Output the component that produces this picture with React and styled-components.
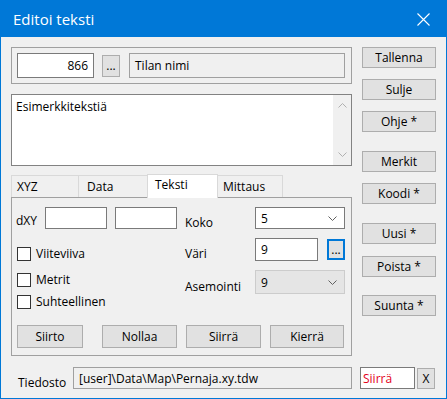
import React from 'react';
import styled, { createGlobalStyle } from 'styled-components';

const Global = createGlobalStyle`
  html, body { margin: 0; padding: 0; background: #f0f0f0; }
  body { font-family: "Open Sans", "Noto Sans", sans-serif; font-size: 12px; color: #000; }
  * { box-sizing: border-box; }
`;

const Window = styled.div`
  width: 447px;
  height: 399px;
  border: 1px solid #0078d7;
  background: #f0f0f0;
  display: flex;
  flex-direction: column;
`;

const TitleBar = styled.div`
  height: 36px;
  flex: none;
  background: #0078d7;
  color: #fff;
  display: flex;
  align-items: center;
  justify-content: space-between;
  padding: 0 16px 0 12px;
  font-size: 15px;
`;

const Body = styled.div`
  flex: 1;
  display: flex;
  flex-direction: column;
  padding: 10px 10px 0 10px;
`;

const Main = styled.div`
  display: flex;
  gap: 10px;
`;

const LeftCol = styled.div`
  width: 341px;
  display: flex;
  flex-direction: column;
`;

const RightCol = styled.div`
  width: 74px;
  display: flex;
  flex-direction: column;
`;

const GroupBox = styled.div`
  height: 37px;
  border: 1px solid #a0a0a0;
  display: flex;
  align-items: center;
  padding: 0 6px 0 5px;
`;

const Field = styled.div`
  height: ${p => p.$h || 25}px;
  width: ${p => (p.$w ? p.$w + 'px' : 'auto')};
  flex: ${p => (p.$w ? 'none' : '1')};
  margin-left: ${p => p.$ml || 0}px;
  background: ${p => (p.$ro ? '#f0f0f0' : '#fff')};
  border: 1px solid ${p => (p.$ro ? '#a0a0a0' : '#7a7a7a')};
  color: ${p => p.$color || '#000'};
  display: flex;
  align-items: center;
  justify-content: ${p => (p.$right ? 'flex-end' : 'flex-start')};
  padding: 0 ${p => (p.$right ? 5 : 0)}px 0 ${p => (p.$pl ?? 5)}px;
  white-space: nowrap;
  overflow: hidden;
`;

const Button = styled.div`
  height: ${p => p.$h || 21}px;
  width: ${p => (p.$w ? p.$w + 'px' : '100%')};
  flex: none;
  margin-left: ${p => p.$ml || 0}px;
  margin-top: ${p => p.$mt || 0}px;
  background: #e1e1e1;
  border: 1px solid ${p => (p.$focus ? '#0078d7' : '#adadad')};
  box-shadow: ${p => (p.$focus ? 'inset 0 0 0 1px #0078d7' : 'none')};
  display: flex;
  align-items: center;
  justify-content: center;
  white-space: nowrap;
`;

const TextArea = styled.div`
  margin-top: 10px;
  height: 72px;
  border: 1px solid #828282;
  background: #fff;
  display: flex;
`;

const TextContent = styled.div`
  flex: 1;
  padding: 3px 4px;
`;

const ScrollBar = styled.div`
  width: 18px;
  background: #f0f0f0;
  display: flex;
  flex-direction: column;
  justify-content: space-between;
  align-items: center;
  padding: 8px 0 8px;
`;

const TabStrip = styled.div`
  margin-top: 8px;
  height: 23px;
  display: flex;
  align-items: flex-end;
`;

const Tab = styled.div`
  width: ${p => p.$w}px;
  height: ${p => (p.$active ? 24 : 22)}px;
  padding-left: ${p => p.$pl}px;
  padding-bottom: ${p => (p.$active ? 4 : 1)}px;
  margin-left: ${p => (p.$first ? 0 : -1)}px;
  margin-bottom: ${p => (p.$active ? -1 : 0)}px;
  position: relative;
  z-index: ${p => (p.$active ? 2 : 1)};
  background: ${p => (p.$active ? '#fff' : '#f0f0f0')};
  border: 1px solid #d9d9d9;
  border-bottom: none;
  display: flex;
  align-items: center;
`;

const TabPanel = styled.div`
  height: 159px;
  border: 1px solid #a0a0a0;
  background: #f0f0f0;
  display: flex;
  flex-direction: column;
  padding: 9px 6px 7px 4px;
`;

const PanelTop = styled.div`
  display: flex;
  gap: 8px;
`;

const LeftArea = styled.div`
  width: 161px;
  display: flex;
  flex-direction: column;
`;

const DxyRow = styled.div`
  height: 22px;
  display: flex;
  align-items: center;
`;

const DxyLabel = styled.span`
  width: 29px;
  padding-top: 5px;
`;

const CheckRow = styled.div`
  display: flex;
  align-items: center;
  height: 15px;
  margin-top: ${p => p.$mt}px;
  padding-left: 1px;
`;

const CheckBox = styled.span`
  width: 14px;
  height: 14px;
  background: #fff;
  border: 1px solid #333;
  margin-right: 5px;
  flex: none;
`;

const RightArea = styled.div`
  flex: 1;
  display: grid;
  grid-template-columns: 70px 90px;
  grid-template-rows: 22px 23px 24px;
  row-gap: 9px;
`;

const FormLabel = styled.span`
  align-self: center;
  padding-top: 8px;
`;

const ControlRow = styled.div`
  display: flex;
  align-items: center;
`;

const Combo = styled.div`
  height: ${p => p.$h}px;
  background: ${p => (p.$list ? '#e5e5e5' : '#fff')};
  border: 1px solid ${p => (p.$list ? '#cccccc' : '#7a7a7a')};
  display: flex;
  align-items: center;
  justify-content: space-between;
  padding: 0 7px 0 5px;
`;

const ButtonRow = styled.div`
  margin-top: auto;
  display: flex;
`;

const BottomRow = styled.div`
  margin-top: 11px;
  height: 22px;
  display: flex;
  align-items: center;
`;

const BottomLabel = styled.span`
  width: 62px;
  padding-left: 7px;
  padding-top: 8px;
`;

const Chevron = ({ up, color = '#606060' }) => (
  <svg width="9" height="5" viewBox="0 0 9 5">
    <polyline
      points={up ? '0.5,4.5 4.5,0.5 8.5,4.5' : '0.5,0.5 4.5,4.5 8.5,0.5'}
      fill="none"
      stroke={color}
      strokeWidth="1"
    />
  </svg>
);

const CloseIcon = () => (
  <svg width="13" height="13" viewBox="0 0 13 13">
    <path d="M0.5 0.5 L12.5 12.5 M12.5 0.5 L0.5 12.5" stroke="#fff" strokeWidth="1.1" />
  </svg>
);

export default function App() {
  return (
    <>
      <Global />
      <Window>
        <TitleBar>
          <span>Editoi teksti</span>
          <CloseIcon />
        </TitleBar>
        <Body>
          <Main>
            <LeftCol>
              <GroupBox>
                <Field $w={77} $right>866</Field>
                <Button $w={18} $h={22} $ml={8}>...</Button>
                <Field $ml={9} $ro>Tilan nimi</Field>
              </GroupBox>
              <TextArea>
                <TextContent>Esimerkkitekstiä</TextContent>
                <ScrollBar>
                  <Chevron up color="#b0b0b0" />
                  <Chevron color="#b0b0b0" />
                </ScrollBar>
              </TextArea>
              <TabStrip>
                <Tab $w={68} $pl={5} $first>XYZ</Tab>
                <Tab $w={70} $pl={8}>Data</Tab>
                <Tab $w={71} $pl={7} $active>Teksti</Tab>
                <Tab $w={66} $pl={5}>Mittaus</Tab>
              </TabStrip>
              <TabPanel>
                <PanelTop>
                  <LeftArea>
                    <DxyRow>
                      <DxyLabel>dXY</DxyLabel>
                      <Field $w={62} $h={22}></Field>
                      <Field $w={62} $h={22} $ml={8}></Field>
                    </DxyRow>
                    <CheckRow $mt={17}><CheckBox />Viiteviiva</CheckRow>
                    <CheckRow $mt={11}><CheckBox />Metrit</CheckRow>
                    <CheckRow $mt={7}><CheckBox />Suhteellinen</CheckRow>
                  </LeftArea>
                  <RightArea>
                    <FormLabel>Koko</FormLabel>
                    <Combo $h={22}>5<Chevron /></Combo>
                    <FormLabel>Väri</FormLabel>
                    <ControlRow>
                      <Field $w={63} $h={23}>9</Field>
                      <Button $w={18} $h={21} $ml={9} $focus>...</Button>
                    </ControlRow>
                    <FormLabel>Asemointi</FormLabel>
                    <Combo $h={24} $list>9<Chevron /></Combo>
                  </RightArea>
                </PanelTop>
                <ButtonRow>
                  <Button $w={66} $h={23} $ml={1}>Siirto</Button>
                  <Button $w={75} $h={23} $ml={19}>Nollaa</Button>
                  <Button $w={75} $h={23} $ml={9}>Siirrä</Button>
                  <Button $w={74} $h={23} $ml={9}>Kierrä</Button>
                </ButtonRow>
              </TabPanel>
            </LeftCol>
            <RightCol>
              <Button>Tallenna</Button>
              <Button $mt={11}>Sulje</Button>
              <Button $mt={11}>Ohje *</Button>
              <Button $mt={19}>Merkit</Button>
              <Button $mt={11}>Koodi *</Button>
              <Button $mt={19}>Uusi *</Button>
              <Button $mt={12}>Poista *</Button>
              <Button $mt={18}>Suunta *</Button>
            </RightCol>
          </Main>
          <BottomRow>
            <BottomLabel>Tiedosto</BottomLabel>
            <Field $w={279} $h={22} $ro>[user]\Data\Map\Pernaja.xy.tdw</Field>
            <Field $w={55} $h={22} $ml={8} $pl={2} $color="#e3001b">Siirrä</Field>
            <Button $w={18} $h={21} $ml={2}>X</Button>
          </BottomRow>
        </Body>
      </Window>
    </>
  );
}
